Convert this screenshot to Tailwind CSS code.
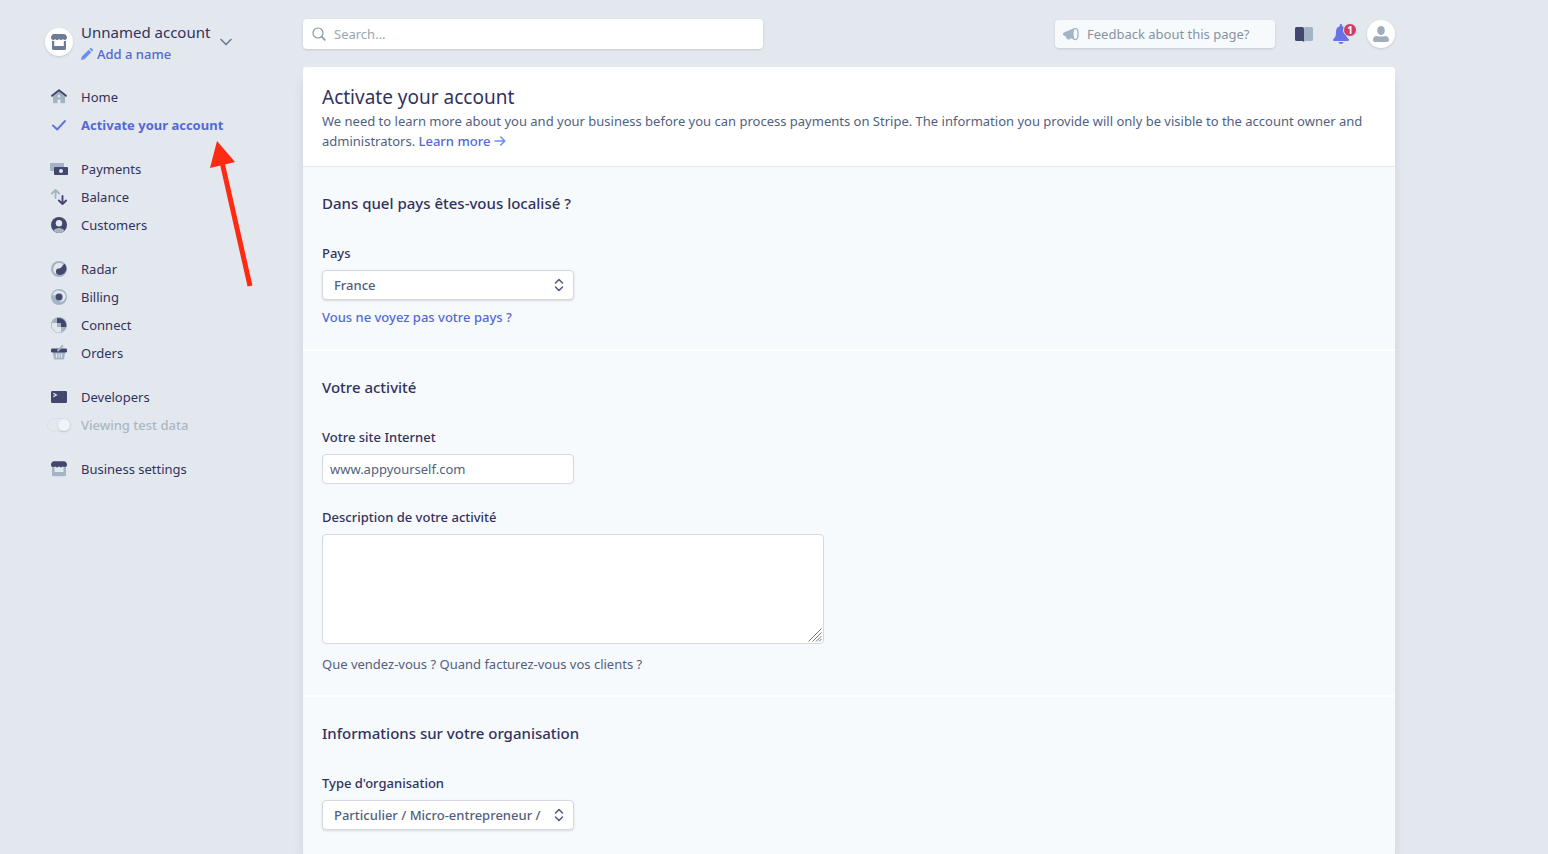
<!DOCTYPE html>
<html lang="fr">
<head>
  <meta charset="UTF-8">
  <meta name="viewport" content="width=device-width, initial-scale=1.0">
  <title>Activate your account</title>
  <script src="https://cdn.jsdelivr.net/npm/@tailwindcss/browser@4"></script>
</head>
<body class="bg-[#e3e8ee] font-['Noto_Sans',sans-serif] text-[13px] leading-5 text-[#32325d]">

  <div class="relative flex min-h-screen pl-11 pr-6">

    <!-- Sidebar -->
    <aside class="w-[259px] shrink-0 pt-5">
      <div class="flex items-center">
        <div class="ml-px flex size-7 shrink-0 items-center justify-center rounded-full bg-white shadow">
          <svg class="size-4" viewBox="0 0 16 16" fill="#6b7c93">
            <path d="M3 0h10c1.500 0 3 2 3 3.500C16 5 15 6 13.800 6c-.8 0-1.500-.4-1.900-1-.4.600-1.100 1-1.900 1s-1.500-.4-2-1c-.4.600-1.100 1-1.900 1S4.500 5.600 4.100 5c-.4.600-1.100 1-1.900 1C1 6 0 5 0 3.500 0 2 1.500 0 3 0z"/>
            <path d="M1 7h2.200v5h9.600V7H15v7.500a1.500 1.500 0 0 1-1.500 1.500h-11A1.500 1.500 0 0 1 1 14.500z"/>
          </svg>
        </div>
        <div class="ml-2 w-[132px] pt-0.5">
          <div class="text-[15px] leading-5 whitespace-nowrap">Unnamed account</div>
          <a href="#" class="mt-0.5 flex items-center gap-1 font-medium text-[#5469d4]">
            <svg class="size-3" viewBox="0 0 12 12" fill="#6c8eef"><path d="M0 12l.8-3.400L7.700 1.700l2.600 2.600-6.900 6.900zM8.500.9l.6-.6a1 1 0 0 1 1.400 0l1.200 1.200a1 1 0 0 1 0 1.400l-.6.600z"/></svg>
            Add a name
          </a>
        </div>
        <button class="ml-[7px]" aria-label="Switch account">
          <svg class="h-2 w-3" viewBox="0 0 12 8" fill="none" stroke="#6b7c93" stroke-width="1.600" stroke-linecap="round" stroke-linejoin="round"><path d="M1 1.500l5 5 5-5"/></svg>
        </button>
      </div>

      <nav class="mt-[19px] flex flex-col gap-4">
        <div>
          <a href="#" class="flex h-7 items-center gap-[7px]">
            <span class="flex w-[30px] justify-center">
              <svg class="size-4" viewBox="0 0 16 16"><path d="M2 6.500L8 2l6 4.500V13.500a.7.700 0 0 1-.7.700H9.500V10.500h-3v3.700H2.700a.7.700 0 0 1-.7-.7z" fill="#a3b4c4"/><circle cx="8" cy="7.300" r="1.200" fill="#e3e8ee"/><path d="M1 6.800l7-5.500 7 5.500" fill="none" stroke="#43466d" stroke-width="1.900" stroke-linecap="round" stroke-linejoin="round"/></svg>
            </span>
            Home
          </a>
          <a href="#" class="flex h-7 items-center gap-[7px] font-bold text-[#5469d4]">
            <span class="flex w-[30px] justify-center">
              <svg class="size-4" viewBox="0 0 16 16" fill="none" stroke="#5f73dd" stroke-width="1.900" stroke-linecap="round" stroke-linejoin="round"><path d="M2 8.500l4.200 4L14 4"/></svg>
            </span>
            Activate your account
          </a>
        </div>

        <div>
          <a href="#" class="flex h-7 items-center gap-[7px]">
            <span class="flex w-[30px] justify-center">
              <svg class="h-3 w-[18px]" viewBox="0 0 18 12"><rect width="14" height="8" rx="1" fill="#a3b4c4"/><rect x="4" y="4" width="14" height="8" rx="1" fill="#43466d"/><circle cx="11" cy="8" r="2" fill="#e3e8ee"/></svg>
            </span>
            Payments
          </a>
          <a href="#" class="flex h-7 items-center gap-[7px]">
            <span class="flex w-[30px] justify-center">
              <svg class="size-4" viewBox="0 0 16 16" fill="none" stroke-width="1.900" stroke-linecap="round" stroke-linejoin="round"><path d="M4.500 9V1M.9 4.500L4.500.9l3.600 3.600" stroke="#a3b4c4"/><path d="M11.500 7v8M7.900 11.500l3.600 3.600 3.600-3.600" stroke="#43466d"/></svg>
            </span>
            Balance
          </a>
          <a href="#" class="flex h-7 items-center gap-[7px]">
            <span class="flex w-[30px] justify-center">
              <svg class="size-4" viewBox="0 0 16 16"><circle cx="8" cy="8" r="8" fill="#43466d"/><path d="M2.400 13.700C3.700 11.900 5.700 11 8 11s4.300.9 5.600 2.700A8 8 0 0 1 8 16a8 8 0 0 1-5.600-2.300z" fill="#a3b4c4"/><circle cx="8" cy="6.200" r="3.200" fill="#e3e8ee"/></svg>
            </span>
            Customers
          </a>
        </div>

        <div>
          <a href="#" class="flex h-7 items-center gap-[7px]">
            <span class="flex w-[30px] justify-center">
              <svg class="size-4" viewBox="0 0 16 16"><circle cx="8" cy="8" r="8" fill="#a3b4c4"/><path d="M5 13A6 6 0 0 1 8 2c1.500 0 3 .4 4 1.200L9 8l-4 1z" fill="#e3e8ee"/><path d="M13.700 2.800A7.500 7.500 0 0 1 15.500 8 6.800 6.800 0 0 1 9 14c-2.400 0-4-1.500-4-3.500S6.200 7.300 7.700 7.500C10.500 7.800 11 5 13.700 2.800z" fill="#43466d"/></svg>
            </span>
            Radar
          </a>
          <a href="#" class="flex h-7 items-center gap-[7px]">
            <span class="flex w-[30px] justify-center">
              <svg class="size-4" viewBox="0 0 16 16"><circle cx="8" cy="8" r="8" fill="#a3b4c4"/><path d="M1.500 6.500A6.800 6.800 0 0 1 14.800 8c-.8 3-3 5-6.300 5 2.500-1.500 3.500-3 3.500-5a4 4 0 0 0-7.500-2c-1 0-2 .2-3 .5z" fill="#e3e8ee"/><circle cx="8" cy="8" r="3.300" fill="#43466d"/></svg>
            </span>
            Billing
          </a>
          <a href="#" class="flex h-7 items-center gap-[7px]">
            <span class="flex w-[30px] justify-center">
              <svg class="size-4" viewBox="0 0 16 16"><circle cx="8" cy="8" r="8" fill="#a3b4c4"/><path d="M1.200 6H6v4h4v5A7 7 0 0 1 1.200 6z" fill="#e3e8ee"/><path d="M6 6V1.300A7.500 7.500 0 0 1 15.200 10H10V6z" fill="#43466d"/><path d="M6 6h4v4H6z" fill="#a3b4c4"/></svg>
            </span>
            Connect
          </a>
          <a href="#" class="flex h-7 items-center gap-[7px]">
            <span class="flex w-[30px] justify-center">
              <svg class="size-4" viewBox="0 0 16 16"><path d="M1.800 7h12.400l-1 6.600c-.1.600-.5.900-1.100.9H3.900c-.6 0-1-.3-1.100-.9z" fill="#a3b4c4"/><path d="M5.500 8.500v4.300M8 8.500v4.300M10.500 8.500v4.300" stroke="#e3e8ee" stroke-width="1.200"/><rect y="3.500" width="16" height="4" rx="1.200" fill="#43466d"/><path d="M7 5.500l4.500-4.500" stroke="#a3b4c4" stroke-width="1.800" stroke-linecap="round"/></svg>
            </span>
            Orders
          </a>
        </div>

        <div>
          <a href="#" class="flex h-7 items-center gap-[7px]">
            <span class="flex w-[30px] justify-center">
              <svg class="h-3 w-4" viewBox="0 0 16 12"><rect width="16" height="12" rx="1.200" fill="#43466d"/><path d="M2.300 2.300l3 1.700-3 1.700" fill="none" stroke="#e3e8ee" stroke-width="1.300"/></svg>
            </span>
            Developers
          </a>
          <label class="flex h-7 items-center gap-[7px] font-medium text-[#aab7c4]">
            <span class="flex w-[30px] justify-center">
              <input type="checkbox" role="switch" class="sr-only" checked>
              <span class="flex h-3.5 w-6 items-center justify-end rounded-full border border-[#d9dfe6]">
                <span class="size-3 rounded-full bg-[#f0f3f7] shadow"></span>
              </span>
            </span>
            Viewing test data
          </label>
        </div>

        <a href="#" class="flex h-7 items-center gap-[7px]">
          <span class="flex w-[30px] justify-center">
            <svg class="size-4" viewBox="0 0 16 16"><path d="M1 6.500h14V14a1.200 1.200 0 0 1-1.200 1.200H2.200A1.200 1.200 0 0 1 1 14z" fill="#a3b4c4"/><path d="M3.500 6.500h9v4.500h-9z" fill="#e3e8ee"/><path d="M3 .3h10c1.500 0 3 1.700 3 3.200C16 5.200 15 6.200 13.800 6.200c-.8 0-1.500-.4-1.900-1-.4.600-1.100 1-1.900 1s-1.500-.4-2-1c-.4.600-1.100 1-1.900 1s-1.600-.4-2-1c-.4.600-1.100 1-1.900 1C1 6.200 0 5.200 0 3.500 0 2 1.500.3 3 .3z" fill="#43466d"/></svg>
          </span>
          Business settings
        </a>
      </nav>
    </aside>

    <!-- Main column -->
    <div class="flex max-w-[1092px] flex-1 flex-col">
      <header class="flex h-[67px] items-center justify-between">
        <label class="flex h-[30px] w-[460px] items-center gap-2 rounded bg-white px-[9px] shadow">
          <svg class="size-3.5 shrink-0" viewBox="0 0 14 14" fill="none" stroke="#8898aa" stroke-width="1.200" stroke-linecap="round"><circle cx="6" cy="6" r="5"/><path d="M10 10l2.800 2.800" stroke-width="1.700"/></svg>
          <input type="search" aria-label="Search" placeholder="Search…" class="w-full outline-none placeholder:text-[#9aa5b3]">
        </label>
        <div class="flex items-center">
          <button class="flex h-7 w-[220px] items-center gap-2 rounded bg-[#f6fafd] px-2 text-[#8792a2] shadow">
            <svg class="h-3.5 w-4" viewBox="0 0 16 14"><path d="M11.500 1L1.500 5.200C.6 5.500 0 6 0 7s.6 1.500 1.500 1.800l1.500.6V10a2.500 2.500 0 0 0 4.800.9l3.700 2z" fill="#a3b4c4"/><ellipse cx="12.500" cy="7" rx="2.600" ry="5.700" fill="#f6fafd" stroke="#a3b4c4" stroke-width="1.300"/></svg>
            Feedback about this page?
          </button>
          <button class="ml-5" aria-label="Documentation">
            <svg class="h-4 w-[18px]" viewBox="0 0 18 16"><path d="M1.500 1H7c1.100 0 2 .6 2 1.500V16c-.6-.6-1.200-1-2-1H1.500A1.500 1.500 0 0 1 0 13.500v-11A1.500 1.500 0 0 1 1.500 1z" fill="#43466d"/><path d="M16.500 1H11c-1.100 0-2 .6-2 1.500V16c.6-.6 1.200-1 2-1h5.500a1.500 1.500 0 0 0 1.500-1.500v-11A1.500 1.500 0 0 0 16.500 1z" fill="#a3b4c4"/></svg>
          </button>
          <button class="relative ml-5" aria-label="Notifications">
            <svg class="h-5 w-4" viewBox="0 0 16 20" fill="#6772e5"><path d="M8 0c.8 0 1.200.7 1.200 1.500v.8C12 3 13 5 13 8c0 4 .8 5.500 2.500 7 .8.900.5 2-.5 2H1c-1 0-1.300-1.100-.5-2C2.200 13.500 3 12 3 8c0-3 1-5 3.800-5.700v-.8C6.800.7 7.200 0 8 0zM5.500 18h5c-.3 1.200-1.200 2-2.500 2s-2.200-.8-2.500-2z"/></svg>
            <span class="absolute -top-px left-2.5 flex size-3.5 items-center justify-center rounded-full border border-[#e3e8ee] bg-[#cd3d64] text-[10px] font-bold text-white">1</span>
          </button>
          <button class="ml-[18px] flex size-7 items-center justify-center rounded-full bg-white shadow" aria-label="Profile">
            <svg class="size-4" viewBox="0 0 16 16" fill="#a3acb9"><ellipse cx="8" cy="4.500" rx="3.800" ry="4.500"/><path d="M0 14c0-2.500 1.500-4 4-4 1.500.8 6.500.8 8 0 2.500 0 4 1.500 4 4 0 1.300-.6 2-2 2H2c-1.400 0-2-.7-2-2z"/></svg>
          </button>
        </div>
      </header>

      <main class="flex-1 rounded-t bg-[#f6fafd] shadow-lg">
        <div class="rounded-t border-b border-[#e3e8ee] bg-white px-[19px] pt-[17px] pb-[15px]">
          <h1 class="mb-px text-[19px] leading-[26px]">Activate your account</h1>
          <p class="text-[#525f7f]">We need to learn more about you and your business before you can process payments on Stripe. The information you provide will only be visible to the account owner and administrators. <a href="#" class="inline-flex items-center gap-1 align-top font-medium text-[#5469d4]">Learn more
            <svg class="h-2.5 w-3" viewBox="0 0 12 10" fill="none" stroke="#6c8eef" stroke-width="1.600" stroke-linecap="round" stroke-linejoin="round"><path d="M1 5h9.500M6.800 1l4 4-4 4"/></svg></a></p>
        </div>

        <section class="border-b-2 border-white px-[19px] pt-6 pb-[22px]">
          <h2 class="text-[15px] leading-6 font-medium">Dans quel pays êtes-vous localisé ?</h2>
          <label for="country" class="mt-7 mb-[7px] block font-medium">Pays</label>
          <div class="relative w-[252px]">
            <select id="country" class="block h-[30px] w-full appearance-none rounded border border-[#d3d8e0] bg-white pr-7 pl-[11px] font-medium text-[#525f7f] shadow-sm">
              <option>France</option>
            </select>
            <svg class="pointer-events-none absolute top-2 right-2.5 h-3.5 w-2.5" viewBox="0 0 10 14" fill="none" stroke="#525f7f" stroke-width="1.600" stroke-linecap="round" stroke-linejoin="round"><path d="M1.500 5L5 1.500 8.500 5M1.500 9L5 12.500 8.500 9"/></svg>
          </div>
          <a href="#" class="mt-[7px] block font-medium text-[#5469d4]">Vous ne voyez pas votre pays ?</a>
        </section>

        <section class="border-b-2 border-white px-[19px] pt-6 pb-[21px]">
          <h2 class="text-[15px] leading-6 font-medium">Votre activité</h2>
          <label for="website" class="mt-7 mb-[7px] block font-medium">Votre site Internet</label>
          <input id="website" type="text" value="www.appyourself.com" class="block h-[30px] w-[252px] rounded border border-[#d3d8e0] bg-white px-[7px] text-[#525f7f]">
          <label for="description" class="mt-[23px] mb-[7px] block font-medium">Description de votre activité</label>
          <div class="relative w-[502px]">
            <textarea id="description" class="block h-[110px] w-full resize-none rounded border border-[#d3d8e0] bg-white px-[7px] py-1"></textarea>
            <svg class="pointer-events-none absolute right-0.5 bottom-0.5 size-3.5" viewBox="0 0 14 14" stroke="#777"><path d="M.5 13.500l13-13M4.500 13.500l9-9M8 13.500L13.500 8M11 13.500l2.500-2.500"/></svg>
          </div>
          <p class="mt-2.5 text-[#525f7f]">Que vendez-vous ? Quand facturez-vous vos clients ?</p>
        </section>

        <section class="px-[19px] pt-6 pb-6">
          <h2 class="text-[15px] leading-6 font-medium">Informations sur votre organisation</h2>
          <label for="organisation" class="mt-7 mb-[7px] block font-medium">Type d'organisation</label>
          <div class="relative w-[252px]">
            <select id="organisation" class="block h-[30px] w-full appearance-none rounded border border-[#d3d8e0] bg-white pr-7 pl-[11px] font-medium text-[#525f7f] shadow-sm">
              <option>Particulier / Micro-entrepreneur /</option>
            </select>
            <svg class="pointer-events-none absolute top-2 right-2.5 h-3.5 w-2.5" viewBox="0 0 10 14" fill="none" stroke="#525f7f" stroke-width="1.600" stroke-linecap="round" stroke-linejoin="round"><path d="M1.500 5L5 1.500 8.500 5M1.500 9L5 12.500 8.500 9"/></svg>
          </div>
        </section>
      </main>
    </div>

    <!-- Arrow pointing at the activation link -->
    <svg class="pointer-events-none absolute top-[140px] left-[208px] h-[150px] w-12" viewBox="0 0 48 150"><path d="M14 22l28 124" stroke="#ff2a12" stroke-width="5"/><path d="M9 1L2 28l25-6z" fill="#ff2a12"/></svg>
  </div>

</body>
</html>
